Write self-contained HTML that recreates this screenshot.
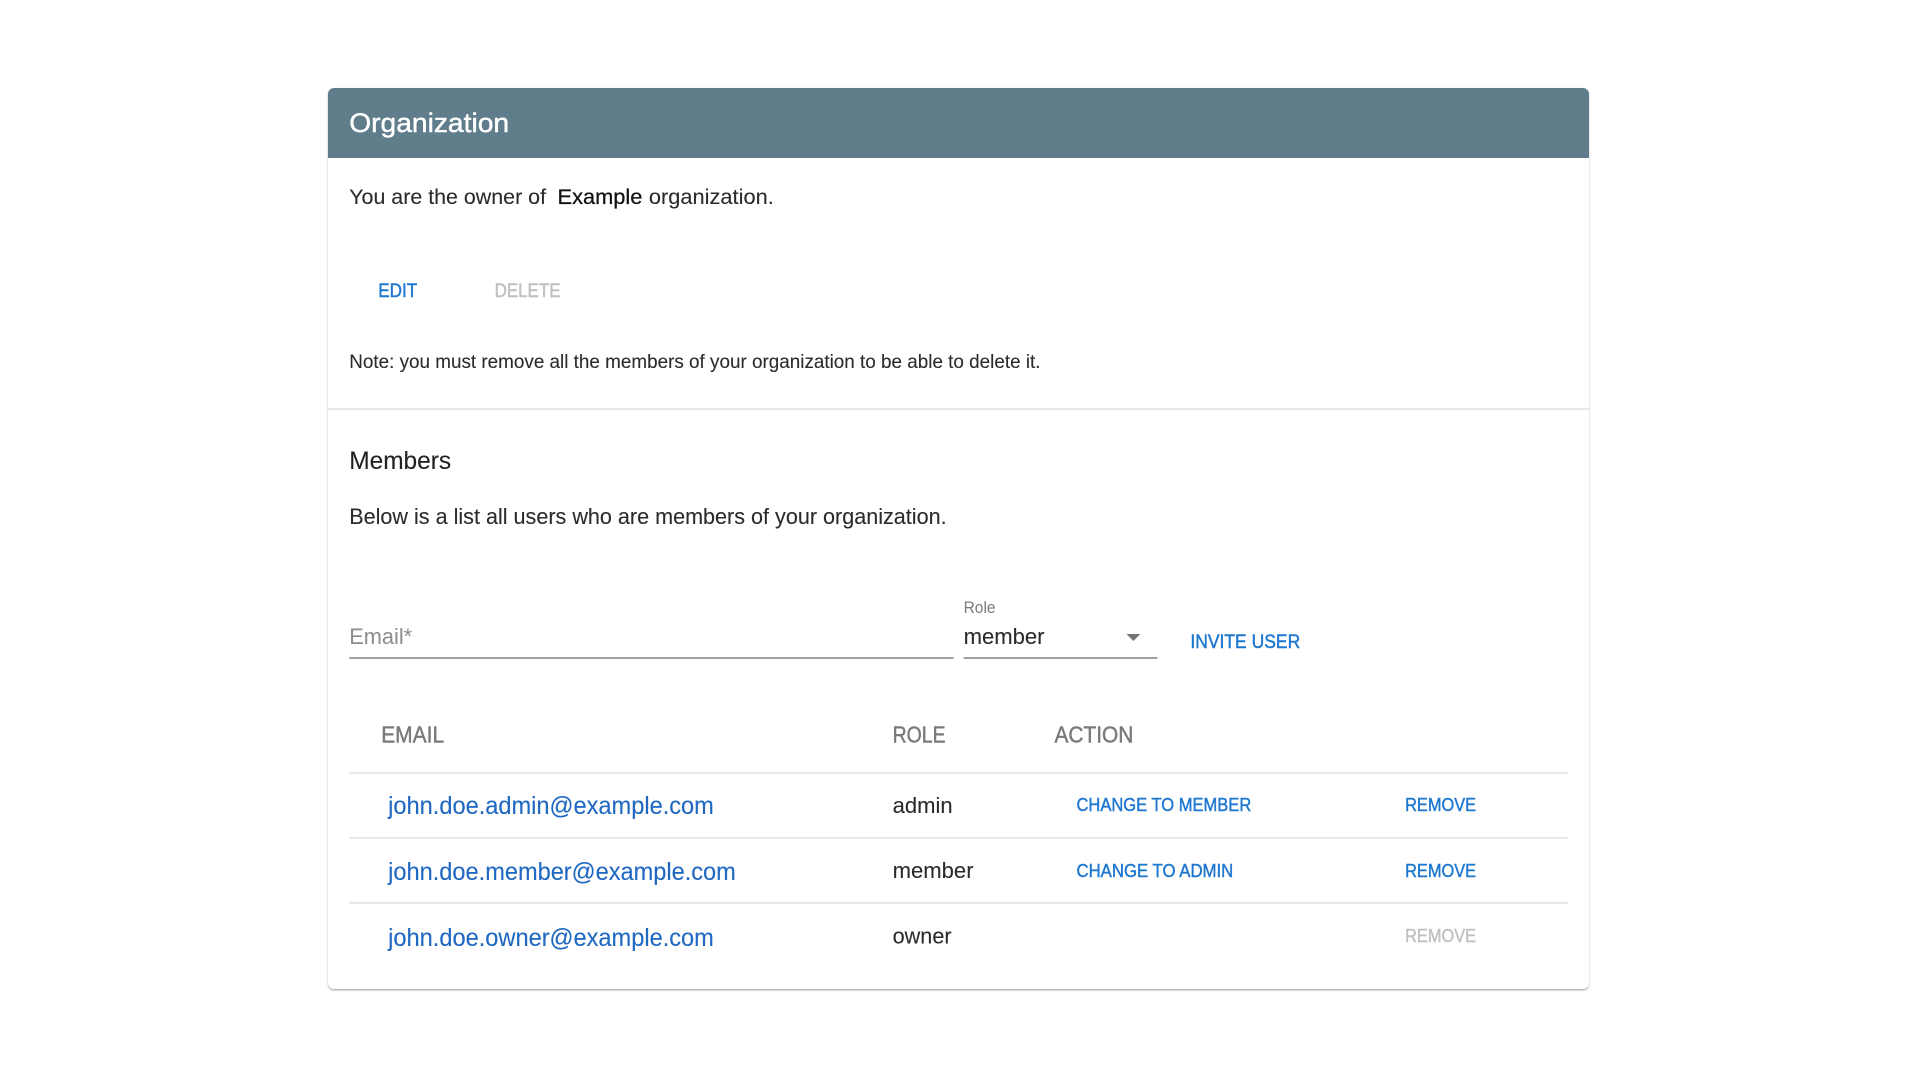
<!DOCTYPE html>
<html lang="en">
<head>
<meta charset="utf-8">
<title>Organization</title>
<style>
html,body{margin:0;padding:0;width:1920px;height:1080px;background:#fff;overflow:hidden}
.card{position:absolute;left:327.5px;top:88px;width:1261.5px;height:901px;background:#fff;border-radius:6px;box-shadow:0 1.5px 1.5px rgba(0,0,0,.28),0 0 2px rgba(0,0,0,.05)}
.head{position:absolute;left:0;top:0;width:100%;height:70px;background:#607d8b;border-radius:6px 6px 0 0}
.line{position:absolute;background:#e8e8e8;height:2px}
.input{position:absolute;background:#a0a0a0;height:2px}
.wrap{position:absolute;left:0;top:0;width:1920px;height:1080px;transform-origin:0 0;transform:matrix(.99895,0,0,1,-.4,0)}
svg{position:absolute;left:0;top:0}
text{font-family:"Liberation Sans",Arial,sans-serif}
.med{stroke-width:.45px}
.blue{fill:#1f78d0;stroke:#1f78d0}
.grey{fill:#c0c0c0;stroke:#c0c0c0}
.th{fill:#7a7a7a;stroke:#7a7a7a}
.lnk{fill:#2068c2;stroke:#2068c2;stroke-width:.12px}
.txt{fill:#2b2b2b;stroke:#2b2b2b;stroke-width:.1px}
</style>
</head>
<body>
<div class="card"><div class="head"></div></div>
<div class="line" style="left:327.5px;top:408px;width:1261.5px"></div>
<div class="wrap">
<div class="input" style="left:350px;top:657px;width:605px"></div>
<div class="input" style="left:965px;top:657px;width:194px"></div>
<div class="line" style="left:350px;top:772px;width:1220px"></div>
<div class="line" style="left:350px;top:837px;width:1220px"></div>
<div class="line" style="left:350px;top:902px;width:1220px"></div>
<svg width="1920" height="1080" viewBox="0 0 1920 1080">
<text x="350" y="132" font-size="26.5" fill="#fff" stroke="#fff" class="med" textLength="160" lengthAdjust="spacingAndGlyphs">Organization</text>
<text x="350" y="204" font-size="21" class="txt" textLength="197" lengthAdjust="spacingAndGlyphs">You are the owner of</text>
<text x="558.5" y="204" font-size="21" fill="#111" stroke="#111" stroke-width=".25" textLength="85" lengthAdjust="spacingAndGlyphs">Example</text>
<text x="650" y="204" font-size="21" class="txt" textLength="125" lengthAdjust="spacingAndGlyphs">organization.</text>
<text x="379" y="297" font-size="19" class="blue med" textLength="39" lengthAdjust="spacingAndGlyphs">EDIT</text>
<text x="495.5" y="297" font-size="19" class="grey med" textLength="66" lengthAdjust="spacingAndGlyphs">DELETE</text>
<text x="350" y="368" font-size="19" class="txt" textLength="692" lengthAdjust="spacingAndGlyphs">Note: you must remove all the members of your organization to be able to delete it.</text>
<text x="350" y="469" font-size="25" fill="#222" stroke="#222" stroke-width=".1" textLength="102" lengthAdjust="spacingAndGlyphs">Members</text>
<text x="350" y="524" font-size="22" class="txt" textLength="598" lengthAdjust="spacingAndGlyphs">Below is a list all users who are members of your organization.</text>
<text x="965" y="613" font-size="16.5" fill="#7a7a7a" textLength="32" lengthAdjust="spacingAndGlyphs">Role</text>
<text x="350" y="644" font-size="22" fill="#8c8c8c" textLength="63" lengthAdjust="spacingAndGlyphs">Email*</text>
<text x="965" y="644" font-size="22" class="txt" textLength="81" lengthAdjust="spacingAndGlyphs">member</text>
<path d="M1128 634h14l-7 7z" fill="#757575"/>
<text x="1192" y="648" font-size="19.5" class="blue med" textLength="110" lengthAdjust="spacingAndGlyphs">INVITE USER</text>
<text x="382" y="742.5" font-size="23" class="th med" textLength="63" lengthAdjust="spacingAndGlyphs">EMAIL</text>
<text x="894" y="742.5" font-size="23" class="th med" textLength="53" lengthAdjust="spacingAndGlyphs">ROLE</text>
<text x="1056" y="742.5" font-size="23" class="th med" textLength="79" lengthAdjust="spacingAndGlyphs">ACTION</text>
<text x="389" y="814" font-size="25" class="lnk" textLength="326" lengthAdjust="spacingAndGlyphs">john.doe.admin@example.com</text>
<text x="894" y="813" font-size="22" class="txt" textLength="60" lengthAdjust="spacingAndGlyphs">admin</text>
<text x="1078" y="811" font-size="18.5" class="blue med" textLength="175" lengthAdjust="spacingAndGlyphs">CHANGE TO MEMBER</text>
<text x="1407" y="811" font-size="18.5" class="blue med" textLength="71" lengthAdjust="spacingAndGlyphs">REMOVE</text>
<text x="389" y="880" font-size="25" class="lnk" textLength="348" lengthAdjust="spacingAndGlyphs">john.doe.member@example.com</text>
<text x="894" y="878" font-size="22" class="txt" textLength="81" lengthAdjust="spacingAndGlyphs">member</text>
<text x="1078" y="877" font-size="18.5" class="blue med" textLength="157" lengthAdjust="spacingAndGlyphs">CHANGE TO ADMIN</text>
<text x="1407" y="877" font-size="18.5" class="blue med" textLength="71" lengthAdjust="spacingAndGlyphs">REMOVE</text>
<text x="389" y="946" font-size="25" class="lnk" textLength="326" lengthAdjust="spacingAndGlyphs">john.doe.owner@example.com</text>
<text x="894" y="943.5" font-size="22" class="txt" textLength="59" lengthAdjust="spacingAndGlyphs">owner</text>
<text x="1407" y="942" font-size="18.5" class="grey med" textLength="71" lengthAdjust="spacingAndGlyphs">REMOVE</text>
</svg>
</div>
</body>
</html>
